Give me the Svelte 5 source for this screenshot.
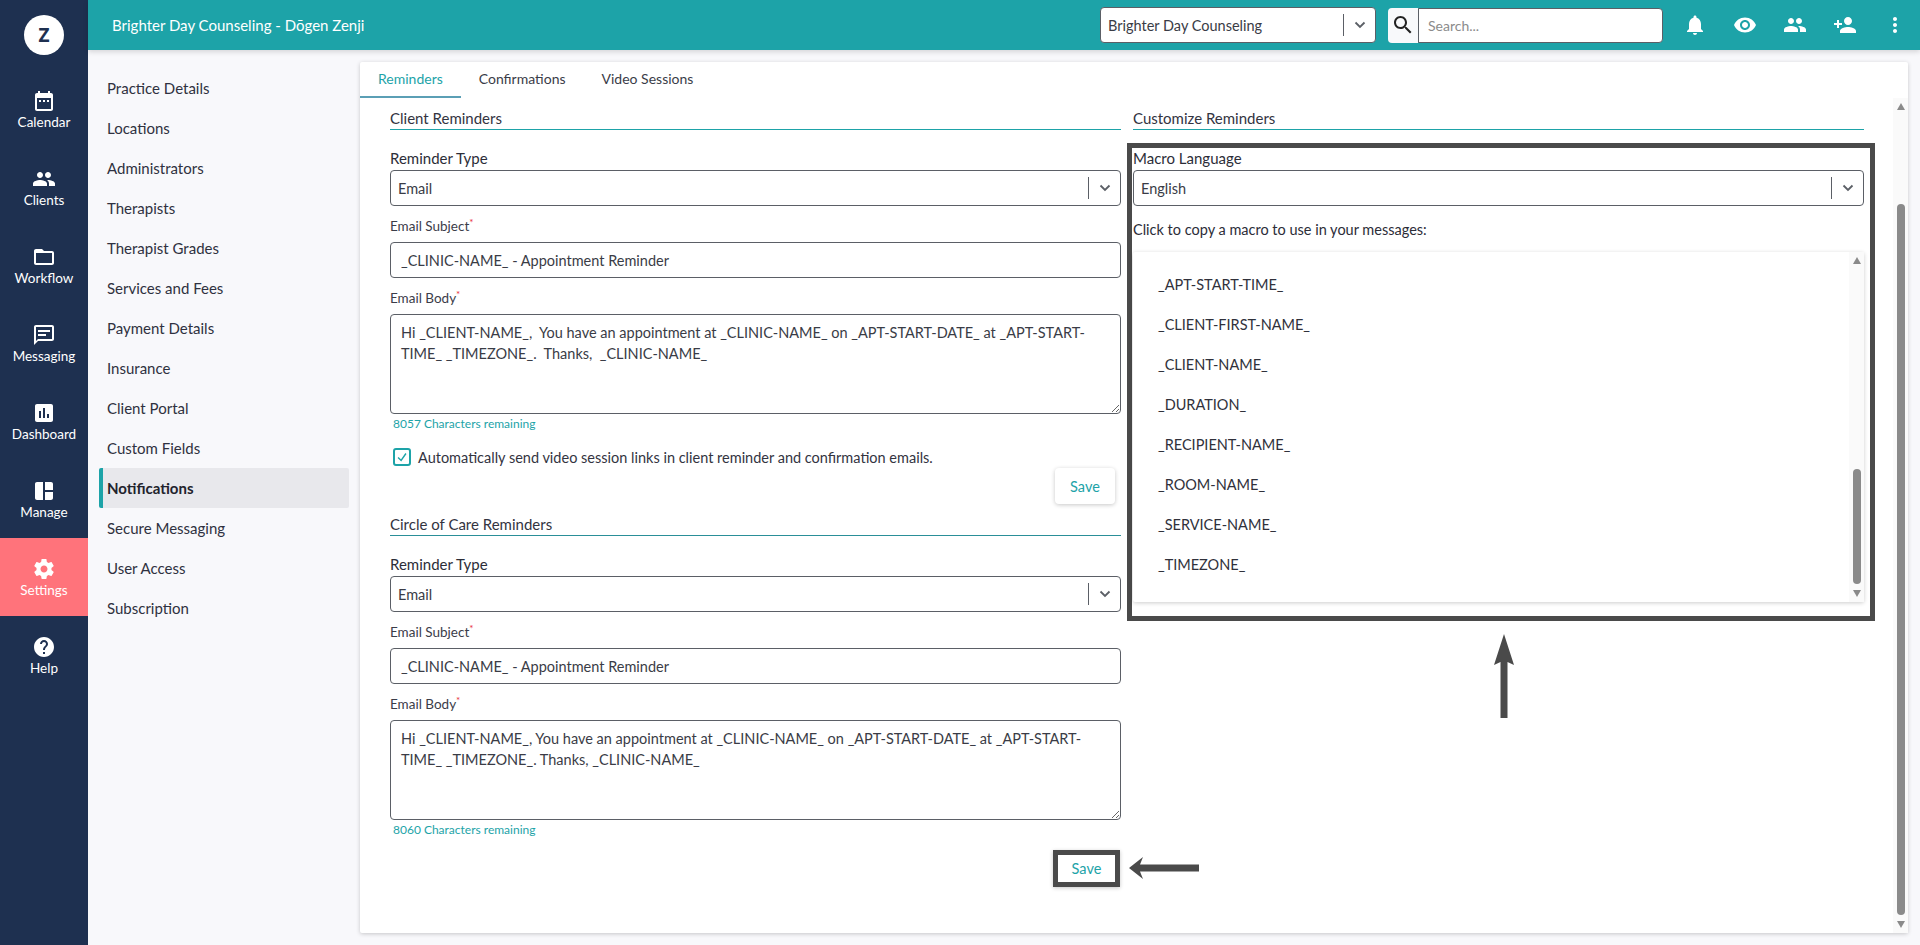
<script>
  const sideItems = [
    { label: 'Calendar', d: 'M9 11H7v2h2v-2zm4 0h-2v2h2v-2zm4 0h-2v2h2v-2zm2-7h-1V2h-2v2H8V2H6v2H5c-1.11 0-1.99.9-1.99 2L3 20c0 1.1.89 2 2 2h14c1.1 0 2-.9 2-2V6c0-1.1-.9-2-2-2zm0 16H5V9h14v11z' },
    { label: 'Clients', d: 'M16 11c1.66 0 2.99-1.34 2.99-3S17.66 5 16 5c-1.66 0-3 1.34-3 3s1.34 3 3 3zm-8 0c1.66 0 2.99-1.34 2.99-3S9.66 5 8 5C6.34 5 5 6.34 5 8s1.34 3 3 3zm0 2c-2.33 0-7 1.17-7 3.5V19h14v-2.5c0-2.33-4.67-3.5-7-3.5zm8 0c-.29 0-.62.02-.97.05 1.16.84 1.97 1.97 1.97 3.45V19h6v-2.5c0-2.33-4.67-3.5-7-3.5z' },
    { label: 'Workflow', d: 'M20 6h-8l-2-2H4c-1.1 0-1.99.9-1.99 2L2 18c0 1.1.9 2 2 2h16c1.1 0 2-.9 2-2V8c0-1.1-.9-2-2-2zm0 12H4V8h16v10z' },
    { label: 'Messaging', d: 'M20 2H4c-1.1 0-2 .9-2 2v18l4-4h14c1.1 0 2-.9 2-2V4c0-1.1-.9-2-2-2zm0 14H6l-2 2V4h16v12zM6 11h8v2H6zM6 7h12v2H6z' },
    { label: 'Dashboard', d: 'M19 3H5c-1.1 0-2 .9-2 2v14c0 1.1.9 2 2 2h14c1.1 0 2-.9 2-2V5c0-1.1-.9-2-2-2zM9 17H7v-7h2v7zm4 0h-2V7h2v10zm4 0h-2v-4h2v4z' },
    { label: 'Manage', d: 'M3 5v14c0 1.1.9 2 2 2h6V3H5c-1.1 0-2 .9-2 2zm10-2v8h8V5c0-1.1-.9-2-2-2h-6zm0 10v8h6c1.1 0 2-.9 2-2v-6h-8z' },
    { label: 'Settings', active: true, d: 'M19.43 12.98c.04-.32.07-.64.07-.98s-.03-.66-.07-.98l2.11-1.65c.19-.15.24-.42.12-.64l-2-3.46c-.12-.22-.39-.3-.61-.22l-2.49 1c-.52-.4-1.08-.73-1.69-.98l-.38-2.65C14.46 2.18 14.25 2 14 2h-4c-.25 0-.46.18-.49.42l-.38 2.65c-.61.25-1.17.59-1.69.98l-2.49-1c-.23-.09-.49 0-.61.22l-2 3.46c-.13.22-.07.49.12.64l2.11 1.65c-.04.32-.07.65-.07.98s.03.66.07.98l-2.11 1.65c-.19.15-.24.42-.12.64l2 3.46c.12.22.39.3.61.22l2.49-1c.52.4 1.08.73 1.69.98l.38 2.65c.03.24.24.42.49.42h4c.25 0 .46-.18.49-.42l.38-2.65c.61-.25 1.17-.59 1.69-.98l2.49 1c.23.09.49 0 .61-.22l2-3.46c.12-.22.07-.49-.12-.64l-2.11-1.65zM12 15.5c-1.93 0-3.5-1.57-3.5-3.5s1.57-3.5 3.5-3.5 3.5 1.57 3.5 3.5-1.57 3.5-3.5 3.5z' },
    { label: 'Help', d: 'M12 2C6.48 2 2 6.48 2 12s4.48 10 10 10 10-4.48 10-10S17.52 2 12 2zm1 17h-2v-2h2v2zm2.07-7.75l-.9.92C13.45 12.9 13 13.5 13 15h-2v-.5c0-1.1.45-2.1 1.17-2.83l1.24-1.26c.37-.36.59-.86.59-1.41 0-1.1-.9-2-2-2s-2 .9-2 2H8c0-2.21 1.79-4 4-4s4 1.79 4 4c0 .88-.36 1.68-.93 2.25z' },
  ];

  const settingsNav = ['Practice Details', 'Locations', 'Administrators', 'Therapists', 'Therapist Grades', 'Services and Fees', 'Payment Details', 'Insurance', 'Client Portal', 'Custom Fields', 'Notifications', 'Secure Messaging', 'User Access', 'Subscription'];

  const topIcons = [
    'M12 22c1.1 0 2-.9 2-2h-4c0 1.1.9 2 2 2zm6-6v-5c0-3.07-1.63-5.64-4.5-6.32V4c0-.83-.67-1.5-1.5-1.5s-1.5.67-1.5 1.5v.68C7.64 5.36 6 7.92 6 11v5l-2 2v1h16v-1l-2-2z',
    'M12 4.5C7 4.5 2.73 7.61 1 12c1.73 4.39 6 7.5 11 7.5s9.27-3.11 11-7.5c-1.73-4.39-6-7.5-11-7.5zM12 17c-2.76 0-5-2.24-5-5s2.24-5 5-5 5 2.24 5 5-2.24 5-5 5zm0-8c-1.66 0-3 1.34-3 3s1.34 3 3 3 3-1.34 3-3-1.34-3-3-3z',
    sideItems[1].d,
    'M15 12c2.21 0 4-1.79 4-4s-1.79-4-4-4-4 1.79-4 4 1.79 4 4 4zm-9-2V7H4v3H1v2h3v3h2v-3h3v-2H6zm9 4c-2.67 0-8 1.34-8 4v2h16v-2c0-2.66-5.33-4-8-4z',
    'M12 8c1.1 0 2-.9 2-2s-.9-2-2-2-2 .9-2 2 .9 2 2 2zm0 2c-1.1 0-2 .9-2 2s.9 2 2 2 2-.9 2-2-.9-2-2-2zm0 6c-1.1 0-2 .9-2 2s.9 2 2 2 2-.9 2-2-.9-2-2-2z',
  ];

  const macros = ['_APT-START-TIME_', '_CLIENT-FIRST-NAME_', '_CLIENT-NAME_', '_DURATION_', '_RECIPIENT-NAME_', '_ROOM-NAME_', '_SERVICE-NAME_', '_TIMEZONE_'];

  const clientBody = 'Hi _CLIENT-NAME_,  You have an appointment at _CLINIC-NAME_ on _APT-START-DATE_ at _APT-START-TIME_ _TIMEZONE_.  Thanks,  _CLINIC-NAME_';
  const careBody = 'Hi _CLIENT-NAME_, You have an appointment at _CLINIC-NAME_ on _APT-START-DATE_ at _APT-START-TIME_ _TIMEZONE_. Thanks, _CLINIC-NAME_';
</script>

{#snippet dropdown(value)}
  <div class="select">
    <span class="select-value">{value}</span>
    <span class="select-sep"></span>
    <svg class="chevron" viewBox="0 0 12 8"><path d="M1.5 1.5 6 6l4.5-4.5" fill="none" stroke="currentColor" stroke-width="1.8"/></svg>
  </div>
{/snippet}

{#snippet reminderFields(body, remaining)}
  <div class="field-label">Reminder Type</div>
  {@render dropdown('Email')}
  <div class="small-label">Email Subject<sup>*</sup></div>
  <input class="text-input" type="text" value="_CLINIC-NAME_ - Appointment Reminder" />
  <div class="small-label">Email Body<sup>*</sup></div>
  <textarea class="text-area" value={body}></textarea>
  <div class="remaining">{remaining} Characters remaining</div>
{/snippet}

<div class="app">
  <aside class="sidebar">
    <div class="logo-wrap"><div class="logo">Z</div></div>
    {#each sideItems as item}
      <div class="side-item" class:active={item.active}>
        <svg viewBox="0 0 24 24"><path d={item.d} /></svg>
        <span>{item.label}</span>
      </div>
    {/each}
  </aside>

  <div class="main">
    <header class="topbar">
      <div class="title">Brighter Day Counseling - Dōgen Zenji</div>
      <div class="top-select">{@render dropdown('Brighter Day Counseling')}</div>
      <div class="search">
        <div class="search-btn">
          <svg viewBox="0 0 24 24"><path d="M15.5 14h-.79l-.28-.27C15.41 12.59 16 11.11 16 9.5 16 5.91 13.09 3 9.5 3S3 5.91 3 9.5 5.91 16 9.5 16c1.61 0 3.09-.59 4.23-1.57l.27.28v.79l5 4.99L20.49 19l-4.99-5zm-6 0C7.01 14 5 11.99 5 9.5S7.01 5 9.5 5 14 7.01 14 9.5 11.99 14 9.5 14z"/></svg>
        </div>
        <input class="search-input" type="text" placeholder="Search..." />
      </div>
      <div class="top-icons">
        {#each topIcons as d}
          <svg viewBox="0 0 24 24"><path {d} /></svg>
        {/each}
      </div>
    </header>

    <div class="below">
      <nav class="settings-nav">
        {#each settingsNav as name}
          <div class="nav-row" class:current={name === 'Notifications'}>{name}</div>
        {/each}
      </nav>

      <section class="card">
        <div class="tabs">
          <div class="tab selected">Reminders</div>
          <div class="tab">Confirmations</div>
          <div class="tab">Video Sessions</div>
        </div>

        <div class="card-body">
          <div class="columns">
            <div class="col">
              <h3 class="heading">Client Reminders</h3>
              {@render reminderFields(clientBody, 8057)}
              <label class="check-row">
                <span class="check">
                  <svg viewBox="0 0 16 16"><path d="M3.5 8.5 7 12l5.5-8" fill="none" stroke="#1da3a8" stroke-width="1.6"/></svg>
                </span>
                Automatically send video session links in client reminder and confirmation emails.
              </label>
              <div class="save-row"><button class="save">Save</button></div>

              <h3 class="heading second">Circle of Care Reminders</h3>
              {@render reminderFields(careBody, 8060)}
              <div class="save-row last">
                <button class="save marked">Save</button>
                <svg class="arrow-left" viewBox="0 0 70 22"><path d="M0 11 14 0l-3 7.500h59v7H11l3 7.500z" /></svg>
              </div>
            </div>

            <div class="col">
              <h3 class="heading">Customize Reminders</h3>
              <div class="marked-box">
                <div class="field-label">Macro Language</div>
                {@render dropdown('English')}
                <div class="copy-hint">Click to copy a macro to use in your messages:</div>
                <div class="macro-box">
                  <ul class="macro-list">
                    {#each macros as macro}
                      <li>{macro}</li>
                    {/each}
                  </ul>
                  <div class="scrollbar small">
                    <span class="arrow up"></span>
                    <span class="thumb"></span>
                    <span class="arrow down"></span>
                  </div>
                </div>
                <svg class="arrow-up" viewBox="0 0 20 84"><path d="M10 0l10 31-6.500-3v56h-7V28L0 31z" /></svg>
              </div>
            </div>
          </div>

          <div class="scrollbar page">
            <span class="arrow up"></span>
            <span class="thumb"></span>
            <span class="arrow down"></span>
          </div>
        </div>
      </section>
    </div>
  </div>
</div>

<style>
  :global(body) {
    background: #f8f8fb;
    overflow: hidden;
  }

  .app {
    display: flex;
    height: 945px;
    font-family: Lato, "Open Sans", sans-serif;
    color: #2c2d38;
  }

  /* ---- left rail ---- */
  .sidebar {
    width: 88px;
    flex-shrink: 0;
    background: #1e3050;
    color: #fff;
  }
  .logo-wrap {
    height: 70px;
    display: flex;
    align-items: center;
    justify-content: center;
  }
  .logo {
    width: 40px;
    height: 40px;
    border-radius: 50%;
    background: #fff;
    color: #1e3050;
    font: 700 19px/40px "Open Sans", sans-serif;
    text-align: center;
  }
  .side-item {
    height: 78px;
    display: flex;
    flex-direction: column;
    align-items: center;
    padding-top: 19px;
    box-sizing: border-box;
    font-size: 13.5px;
    line-height: 18px;
  }
  .side-item svg {
    width: 24px;
    height: 24px;
    fill: #fff;
    margin-bottom: 0;
  }
  .side-item.active { background: #ff737b; }

  /* ---- top bar ---- */
  .main {
    flex: 1;
    min-width: 0;
    display: flex;
    flex-direction: column;
  }
  .topbar {
    height: 50px;
    flex-shrink: 0;
    display: flex;
    align-items: center;
    background: #1da3a8;
    padding-left: 24px;
    box-shadow: 0 2px 5px rgba(0, 0, 0, 0.14);
    position: relative;
  }
  .title {
    color: #fff;
    font-size: 15px;
    width: 988px;
  }
  .top-select { width: 276px; }
  .search {
    display: flex;
    margin-left: 12px;
    height: 35px;
  }
  .search-btn {
    width: 30px;
    background: #f8f9fb;
    border-radius: 4px 0 0 4px;
    display: flex;
    align-items: center;
    justify-content: center;
  }
  .search-btn svg { width: 24px; height: 24px; fill: #222; }
  .search-input {
    width: 245px;
    box-sizing: border-box;
    border: 1px solid #5b5f66;
    border-radius: 0 4px 4px 0;
    padding: 0 9px;
    font: 14px Lato, sans-serif;
    outline: none;
  }
  .search-input::placeholder { color: #8b8b8b; }
  .top-icons {
    display: flex;
    margin-left: 20px;
    gap: 26px;
  }
  .top-icons svg { width: 24px; height: 24px; fill: #fff; }

  /* ---- settings list ---- */
  .below {
    flex: 1;
    display: flex;
    min-height: 0;
  }
  .settings-nav {
    width: 272px;
    flex-shrink: 0;
    box-sizing: border-box;
    padding: 18px 11px 0;
  }
  .nav-row {
    height: 40px;
    line-height: 40px;
    padding-left: 8px;
    font-size: 15px;
    color: #2f3140;
    border-radius: 2px;
  }
  .nav-row.current {
    background: #e8e8ec;
    border-left: 4px solid #1da3a8;
    padding-left: 4px;
    font-weight: 700;
    color: #22232c;
  }

  /* ---- card ---- */
  .card {
    width: 1548px;
    height: 871px;
    margin-top: 12px;
    background: #fff;
    box-shadow: 0 1px 4px rgba(0, 0, 0, 0.2);
    border-radius: 2px;
    display: flex;
    flex-direction: column;
  }
  .tabs {
    display: flex;
    height: 36px;
    flex-shrink: 0;
  }
  .tab {
    padding: 0 18px;
    line-height: 34px;
    font-size: 14px;
    color: #3a3c48;
    box-sizing: border-box;
  }
  .tab.selected {
    color: #1da3a8;
    border-bottom: 2px solid #5b9fb5;
  }
  .card-body {
    flex: 1;
    min-height: 0;
    display: flex;
    justify-content: space-between;
    padding-left: 30px;
  }
  .columns {
    display: grid;
    grid-template-columns: 731px 731px;
    column-gap: 12px;
    align-content: start;
    padding-top: 10px;
  }
  .heading {
    margin: 0;
    height: 21px;
    line-height: 20px;
    font-size: 15px;
    font-weight: 400;
    color: #33343f;
    border-bottom: 1px solid #1da3a8;
    box-sizing: content-box;
  }
  .heading.second {
    margin-top: 10px;
    border-bottom-color: #2a8f98;
  }
  .field-label {
    height: 20px;
    line-height: 20px;
    margin: 18px 0 2px;
    font-size: 15px;
    color: #2c2d38;
  }
  .small-label {
    height: 18px;
    line-height: 18px;
    margin: 11px 0 7px;
    font-size: 13.5px;
    color: #3b3d49;
  }
  .small-label sup {
    color: #e8303a;
    font-size: 10px;
    line-height: 0;
  }

  .select {
    height: 36px;
    box-sizing: border-box;
    display: flex;
    align-items: center;
    background: #fff;
    border: 1px solid #5b5f66;
    border-radius: 4px;
    padding-left: 7px;
    font-size: 14.5px;
    color: #3a3c46;
  }
  .select-value { flex: 1; }
  .select-sep {
    width: 1px;
    height: 22px;
    background: #5b5f66;
  }
  .chevron {
    width: 12px;
    height: 8px;
    margin: 0 9px 0 10px;
    color: #5b5f66;
  }

  .text-input {
    display: block;
    width: 100%;
    height: 36px;
    box-sizing: border-box;
    border: 1px solid #5b5f66;
    border-radius: 4px;
    padding: 0 10px;
    font: 14.5px Lato, sans-serif;
    color: #3a3c46;
    outline: none;
  }
  .text-area {
    display: block;
    width: 100%;
    height: 100px;
    box-sizing: border-box;
    border: 1px solid #5b5f66;
    border-radius: 4px;
    padding: 7px 10px;
    font: 14.5px/21px Lato, sans-serif;
    color: #3a3c46;
    outline: none;
  }
  .remaining {
    height: 14px;
    line-height: 14px;
    margin-top: 3px;
    padding-left: 3px;
    font-size: 12px;
    color: #1da3a8;
  }
  .check-row {
    display: flex;
    align-items: center;
    height: 18px;
    margin-top: 17px;
    padding-left: 3px;
    font-size: 14.5px;
    color: #33343f;
  }
  .check {
    width: 18px;
    height: 18px;
    box-sizing: border-box;
    border: 2px solid #1da3a8;
    border-radius: 3px;
    margin-right: 7px;
    flex-shrink: 0;
  }
  .check svg { display: block; width: 14px; height: 14px; }

  .save-row {
    display: flex;
    justify-content: flex-end;
    margin-top: 2px;
    padding-right: 6px;
  }
  .save {
    width: 60px;
    height: 36px;
    background: #fff;
    border: none;
    border-radius: 4px;
    box-shadow: 0 1px 4px rgba(0, 0, 0, 0.22);
    color: #1da3a8;
    font: 14.5px Lato, sans-serif;
  }
  .save-row.last {
    margin-top: 13px;
    padding-right: 1px;
    position: relative;
  }
  .save.marked {
    width: 67px;
    height: 37px;
    box-sizing: border-box;
    border: 5px solid #4a4a4a;
    border-radius: 0;
  }
  .arrow-left {
    position: absolute;
    left: 739px;
    top: 7px;
    width: 70px;
    height: 22px;
    fill: #4a4a4a;
  }

  /* ---- macro panel ---- */
  .marked-box {
    position: relative;
    width: 748px;
    box-sizing: border-box;
    margin: 13px 0 0 -6px;
    padding: 0 6px 14px 1px;
    border: 5px solid #4a4a4a;
  }
  .marked-box .field-label { margin-top: 0; }
  .copy-hint {
    height: 20px;
    line-height: 20px;
    margin-top: 14px;
    font-size: 14.5px;
  }
  .macro-box {
    height: 350px;
    margin-top: 12px;
    display: flex;
    justify-content: space-between;
    background: #fff;
    border-radius: 2px;
    box-shadow: 0 1px 4px rgba(0, 0, 0, 0.2);
  }
  .macro-list {
    list-style: none;
    margin: 0;
    padding: 13px 0 0 25px;
  }
  .macro-list li {
    height: 40px;
    line-height: 40px;
    font-size: 14.5px;
    color: #30313b;
  }
  .arrow-up {
    position: absolute;
    left: 362px;
    top: 486px;
    width: 20px;
    height: 84px;
    fill: #4a4a4a;
  }

  /* ---- fake scrollbars ---- */
  .scrollbar {
    width: 15px;
    flex-shrink: 0;
    display: flex;
    flex-direction: column;
    align-items: center;
    box-sizing: border-box;
    background: #fafafa;
    padding: 5px 0;
  }
  .arrow {
    width: 0;
    height: 0;
    border-left: 4.500px solid transparent;
    border-right: 4.500px solid transparent;
  }
  .arrow.up { border-bottom: 7px solid #8a8a8a; }
  .arrow.down { border-top: 7px solid #8a8a8a; margin-top: 6px; }
  .thumb {
    width: 8px;
    margin-top: auto;
    border-radius: 4px;
    background: #8a8a8a;
  }
  .scrollbar.page .thumb { height: 711px; }
  .scrollbar.small .thumb { height: 115px; }
</style>
